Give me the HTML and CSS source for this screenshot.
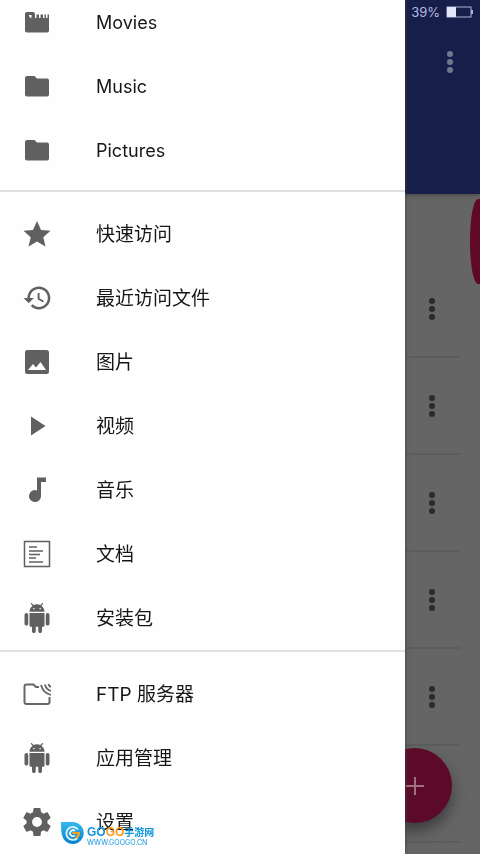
FILE: index.html
```html
<!DOCTYPE html>
<html lang="zh-CN">
<head>
<meta charset="utf-8">
<meta name="viewport" content="width=device-width, initial-scale=1">
<title>文件管理</title>
<link rel="stylesheet" href="styles.css">
</head>
<body>
<svg class="defs" aria-hidden="true">
  <symbol id="more" viewBox="0 0 8 24"><circle cx="4" cy="4" r="3"/><circle cx="4" cy="12" r="3"/><circle cx="4" cy="20" r="3"/></symbol>
  <symbol id="folder" viewBox="0 0 28 28"><path d="M4 4h7.500l2.500 2.500H24a2 2 0 0 1 2 2V22.500a2 2 0 0 1-2 2H4a2 2 0 0 1-2-2V6a2 2 0 0 1 2-2z"/></symbol>
  <symbol id="android" viewBox="0 0 24 24"><path d="M6 18c0 .55.45 1 1 1h1v3.500c0 .83.67 1.500 1.500 1.500s1.500-.67 1.500-1.500V19h2v3.500c0 .83.67 1.500 1.500 1.500s1.500-.67 1.500-1.500V19h1c.55 0 1-.45 1-1V8H6v10zM3.500 8C2.670 8 2 8.670 2 9.500v7c0 .83.67 1.500 1.500 1.500S5 17.330 5 16.500v-7C5 8.670 4.330 8 3.500 8zm17 0c-.83 0-1.500.67-1.500 1.500v7c0 .83.67 1.500 1.500 1.500s1.500-.67 1.500-1.500v-7c0-.83-.67-1.500-1.500-1.500zm-4.970-5.840l1.300-1.300c.2-.2.2-.51 0-.71-.2-.2-.51-.2-.71 0l-1.480 1.480C13.850 1.230 12.950 1 12 1c-.96 0-1.860.23-2.660.63L7.850.15c-.2-.2-.51-.2-.71 0-.2.2-.2.51 0 .71l1.310 1.310C6.970 3.260 6 5.010 6 7h12c0-1.990-.97-3.750-2.470-4.840zM10 5H9V4h1v1zm5 0h-1V4h1v1z"/></symbol>
</svg>

<div class="app">
  <header class="toolbar">
    <div class="status">
      <span>39%</span>
      <svg class="battery" viewBox="0 0 28 12" aria-hidden="true"><rect x="1" y="1" width="24" height="10" fill="none" stroke="#aeb2dc"/><rect x="1" y="1" width="9" height="10" fill="#e4e6fa"/><rect x="25" y="4" width="2" height="4" fill="#aeb2dc"/></svg>
    </div>
    <button class="more" aria-label="更多选项"><svg><use href="#more"/></svg></button>
  </header>
  <main class="files">
    <div class="summary"><span class="pill"></span></div>
    <ul class="file-list">
      <li><button class="more" aria-label="文件选项"><svg><use href="#more"/></svg></button></li>
      <li><button class="more" aria-label="文件选项"><svg><use href="#more"/></svg></button></li>
      <li><button class="more" aria-label="文件选项"><svg><use href="#more"/></svg></button></li>
      <li><button class="more" aria-label="文件选项"><svg><use href="#more"/></svg></button></li>
      <li><button class="more" aria-label="文件选项"><svg><use href="#more"/></svg></button></li>
      <li></li>
    </ul>
  </main>
  <button class="fab" aria-label="新建"><svg viewBox="0 0 20 20"><path d="M10 1v18M1 10h18"/></svg></button>
</div>

<nav class="drawer">
  <div class="group folders">
    <a href="#movies"><svg viewBox="0 0 28 28"><path d="M4 4h7l1 2v4h1.500V6.500H16V10h1.500V6.500H20V10h1.500V6.500H23V10h1.500V6.500H26v16a2 2 0 0 1-2 2H4a2 2 0 0 1-2-2V6a2 2 0 0 1 2-2zM6 7v1l1.500 2h1V7z" fill-rule="evenodd"/></svg>Movies</a>
    <a href="#music"><svg><use href="#folder"/></svg>Music</a>
    <a href="#pictures"><svg><use href="#folder"/></svg>Pictures</a>
  </div>
  <div class="group">
    <a href="#quick"><svg viewBox="0 0 28 28"><path d="M14 1l4 9 9.500.8-7.200 6.400 2.200 9.300L14 21.600l-8.500 4.900 2.200-9.300L.5 10.800 10 10z"/></svg>快速访问</a>
    <a href="#recent"><svg viewBox="1 1 22 22"><path d="M13.500 3c-4.970 0-9 4.030-9 9h-3l3.890 3.890.07.14L9.500 12h-3c0-3.870 3.130-7 7-7s7 3.130 7 7-3.130 7-7 7c-1.930 0-3.680-.79-4.940-2.060l-1.420 1.420C8.770 19.990 11.010 21 13.500 21c4.970 0 9-4.030 9-9s-4.030-9-9-9zM12.500 8v5l4.280 2.540.72-1.210-3.500-2.080V8h-1.500z"/></svg>最近访问文件</a>
    <a href="#images"><svg viewBox="0 0 28 28"><path d="M4.500 2h19A2.500 2.500 0 0 1 26 4.500v19a2.500 2.500 0 0 1-2.500 2.500h-19A2.500 2.500 0 0 1 2 23.500v-19A2.500 2.500 0 0 1 4.500 2zM5 22h18l-5.500-8-4.500 5.500-3-3.500z" fill-rule="evenodd"/></svg>图片</a>
    <a href="#video"><svg viewBox="0 0 28 28"><path d="M8 4.500v19L22.500 14z"/></svg>视频</a>
    <a href="#audio"><svg viewBox="0 0 28 28"><path d="M14 1.500h9V6h-5v14a6 6 0 1 1-4-5.600z"/></svg>音乐</a>
    <a href="#documents"><svg viewBox="0 0 28 28"><path d="M1.500 1.500h25v25h-25zM6 7h8M6 11h14M6 14.500h11M6 18h7M6 22h14" fill="none" stroke="#606060" stroke-width="1.500"/></svg>文档</a>
    <a href="#packages"><svg class="large"><use href="#android"/></svg>安装包</a>
  </div>
  <div class="group">
    <a href="#ftp"><svg viewBox="0 0 28 28"><path d="M16 7h-3l-2.500-2.500H3.500a2 2 0 0 0-2 2v15.500a2 2 0 0 0 2 2h21a2 2 0 0 0 2-2V17" fill="none" stroke="#666" stroke-width="2"/><path d="M18 5q2 8 10 10M22 4.500q1 5 6 6.500M25.500 4q.5 2.500 2.500 3" fill="none" stroke="#666" stroke-width="1.800"/></svg>FTP 服务器</a>
    <a href="#apps"><svg class="large"><use href="#android"/></svg>应用管理</a>
    <a href="#settings"><svg viewBox="2 2 20 20"><path d="M19.430 12.980c.04-.32.07-.64.07-.98s-.03-.66-.07-.98l2.110-1.650c.19-.15.24-.42.12-.64l-2-3.460c-.12-.22-.39-.3-.61-.22l-2.490 1c-.52-.4-1.080-.73-1.690-.98l-.38-2.650C14.460 2.180 14.250 2 14 2h-4c-.25 0-.46.18-.49.42l-.38 2.650c-.61.25-1.170.59-1.690.98l-2.490-1c-.23-.09-.49 0-.61.22l-2 3.460c-.13.22-.07.49.12.64l2.110 1.650c-.04.32-.07.65-.07.98s.03.66.07.98l-2.110 1.650c-.19.15-.24.42-.12.64l2 3.460c.12.22.39.3.61.22l2.490-1c.52.4 1.080.73 1.690.98l.38 2.650c.03.24.24.42.49.42h4c.25 0 .46-.18.49-.42l.38-2.650c.61-.25 1.170-.59 1.690-.98l2.490 1c.23.09.49 0 .61-.22l2-3.460c.12-.22.07-.49-.12-.64l-2.110-1.650zM12 15.500c-1.930 0-3.500-1.570-3.500-3.500s1.570-3.500 3.500-3.500 3.500 1.570 3.500 3.500-1.570 3.500-3.500 3.500z"/></svg>设置</a>
  </div>
</nav>

<div class="watermark">
  <svg viewBox="0 0 24 22" aria-hidden="true">
    <defs><linearGradient id="blue" x2="0" y2="1"><stop stop-color="#35b9ee"/><stop offset="1" stop-color="#087fc9"/></linearGradient></defs>
    <path d="M0 0h13a11 11 0 1 1-12 13Q0 10 0 0z" fill="url(#blue)"/>
    <path d="M17 7.500A6.500 6.500 0 1 0 16.500 16" fill="none" stroke="#d9f3ff" stroke-width="1.800"/>
    <path d="M14 9a3 3 0 1 0 0 4.500" fill="none" stroke="#fff" stroke-width="1.500"/>
    <path d="M11.500 11H18q0 3-3 5" fill="none" stroke="#ffa51e" stroke-width="2"/>
  </svg>
  <div class="brand">
    <div class="name"><b class="go">GO</b><b class="go orange">GO</b><b>手游网</b></div>
    <div class="site">WWW.GOOGO.CN</div>
  </div>
</div>
</body>
</html>
```
FILE: styles.css
```css
* { box-sizing: border-box; }

body {
  margin: 0;
  min-height: 100vh;
  overflow: hidden;
  font-family: Inter, "Noto Sans CJK SC", sans-serif;
  background: #656565;
}

button { padding: 0; border: 0; background: none; }
.defs { position: absolute; width: 0; height: 0; }

.app { min-height: 100vh; }

.toolbar {
  display: flex;
  flex-direction: column;
  align-items: flex-end;
  gap: 30px;
  height: 194px;
  padding: 4px 6px;
  background: #171e49;
  box-shadow: 0 1px 4px #444;
}
.status {
  display: flex;
  align-items: center;
  gap: 6px;
  font-size: 13px;
  line-height: 16px;
  color: #b5b9e0;
}
.battery { width: 28px; height: 12px; }

.more { display: block; width: 8px; height: 24px; fill: #2b2b2b; }
.more svg { display: block; width: 8px; height: 24px; }
.toolbar .more { margin-right: 20px; fill: #74778f; }

.summary {
  display: flex;
  justify-content: flex-end;
  height: 67px;
  padding-top: 5px;
}
.pill {
  width: 10px;
  height: 85px;
  flex: none;
  border-radius: 8px 0 0 8px / 42px 0 0 42px;
  background: #5f0828;
}

.file-list { margin: 0 20px 0 0; padding: 0; list-style: none; }
.file-list li {
  display: flex;
  align-items: center;
  justify-content: flex-end;
  height: 97px;
  padding-right: 24px;
  border-bottom: 2px solid #5c5c5c;
}

.fab {
  position: fixed;
  right: 28px;
  bottom: 31px;
  display: grid;
  place-items: center;
  width: 75px;
  height: 75px;
  border-radius: 50%;
  background: #5c0a29;
  box-shadow: 0 8px 14px #3c3c3c;
}
.fab svg { width: 20px; height: 20px; fill: none; stroke: #a06f80; stroke-width: 2; }

.drawer {
  position: fixed;
  inset: 0 auto 0 0;
  display: flex;
  flex-direction: column;
  justify-content: flex-end;
  width: calc(100% - 75px);
  background: #fefefe;
  box-shadow: 0 0 4px #444;
}
.group + .group { padding-top: 10px; border-top: 2px solid #e0e0e0; }
.folders { padding-bottom: 8px; }
.group a {
  display: flex;
  align-items: center;
  gap: 44px;
  height: 64px;
  padding: 0 0 4px 22px;
  font-size: 19px;
  color: #161616;
  text-decoration: none;
}
.group svg { width: 30px; height: 28px; margin-top: 4px; flex: none; fill: #606060; }
.group svg.large { height: 32px; }
.folders a { padding-bottom: 0; font-size: 18px; }
.folders svg { margin-top: 0; }

.watermark {
  position: fixed;
  left: 61px;
  bottom: 8px;
  display: flex;
  align-items: flex-start;
  gap: 2px;
  color: #1297dd;
}
.watermark svg { width: 24px; height: 22px; }
.brand { padding-top: 3px; }
.name { display: flex; align-items: center; height: 14px; font-size: 10px; line-height: 14px; }
.go { font-family: "Liberation Sans", sans-serif; font-size: 12px; }
.orange { color: #ff9c17; }
.site { font-size: 7px; line-height: 7px; }
```
